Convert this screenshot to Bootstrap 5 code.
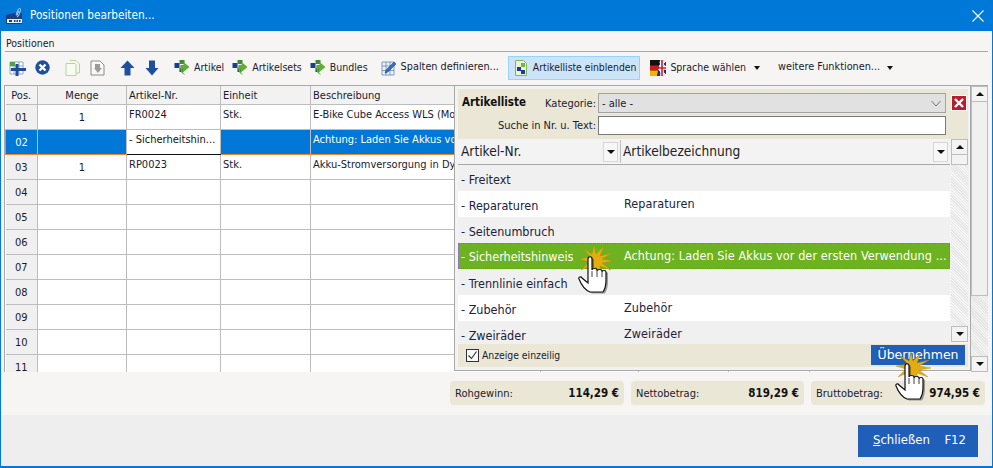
<!DOCTYPE html>
<html lang="de">
<head>
<meta charset="utf-8">
<title>Positionen bearbeiten</title>
<link rel="stylesheet" href="https://cdn.jsdelivr.net/npm/bootstrap@5.3.0/dist/css/bootstrap.min.css">
<style>
html,body{height:468px;overflow:hidden;background:#f6f5f3}
body{font-family:"DejaVu Sans",sans-serif;font-stretch:condensed;font-size:11px;line-height:1;color:#1a1a2e}
.win{width:993px;height:468px;border:1px solid #0078d7;border-top:0;border-bottom-width:2px}
.ttl{height:31px;background:#0078d7;color:#fff;font-size:11.700px;padding-left:5px;flex:none}
.ttl .cls{margin-left:auto;margin-right:8px}
.menu-lbl{height:21px;margin:0 4px;padding:7px 1px 0;border-bottom:1.500px solid #a8a8a8;flex:none;font-size:10.500px}
.tools{height:33px;padding:0 0 2px 8px;flex:none;font-size:10.500px}
.tool{white-space:nowrap;color:#1a1a2e;flex:none}
.fs-s{font-size:10.300px}
.fs-m{font-size:10.800px}
.act{height:24px;padding:0 3px 0 6px;margin:0 10px 0 9px;background:#cce4f7;border:1px solid #99d1ff}
.caret{display:inline-block;border:3.500px solid transparent;border-top:4px solid #111;border-bottom:0}
.gridwrap{height:287px;margin:0 4px 0 3px;border-top:1.500px solid #a8a8a8;flex:none;overflow:hidden}
.gridbox{width:968px;height:286px;overflow:hidden;background:#fff;border-left:1px solid #a8a8a8}
.gtab{table-layout:fixed;width:968px;margin:0;border-collapse:collapse;--bs-table-bg:transparent;font-size:11px}
.gtab th,.gtab td{border:0;border-right:1px solid #bdbdbd;border-bottom:1px solid #bdbdbd;padding:0 2px;overflow:hidden;white-space:nowrap;color:#1a1a2e;font-weight:400;box-shadow:none}
.gtab th{height:18px;background:#f2f2f2;vertical-align:middle;padding-left:2px;padding-top:1px;border-bottom:1px solid #bdbdbd}
.gtab td{height:25px;vertical-align:top;padding-top:4px}
.gtab td.pos{background:#f0f0f0;text-align:center;vertical-align:middle;padding:1px 0 0}
.gtab td.qty{text-align:center;vertical-align:middle;padding:1px 0 0}
.gtab tr.sel td{background:#0078d7;color:#fff;border-right-color:#bdbdbd;border-top:1.500px solid #f08a24;border-bottom:1.500px solid #f08a24}
.gtab tr.sel td.edit{background:#fff;color:#111;border-top:1.500px solid #111;border-bottom:1.500px solid #111}
.gtab tr.sel td.pos{border-left:1.500px solid #f08a24}
.vbar{width:17px;flex:none;background-image:repeating-linear-gradient(45deg,#f4f4f4 0 1px,#e4e4e4 1px 2px)}
.sb{height:16px;background:#f3f3f3;border:1px solid #bdbdbd;flex:none}
.up{display:block;border:4px solid transparent;border-bottom:4px solid #111;border-top:0;width:0}
.dn{display:block;border:4px solid transparent;border-top:4px solid #111;border-bottom:0;width:0}
.thumb{height:194px;background:#f0f0f0;border:1px solid #bdbdbd;border-top:0;flex:none}
.panel{left:450px;top:0;width:517px;height:284.500px;background:#f3f3f3;border:1.500px solid #a8a8a8;border-top:0;padding:3px 2px 3px 3px}
.phead{background:#ebe7d6;height:50px;flex:none;padding:4px 0 0 4px}
.ptitle{font-weight:700;width:78px;font-size:11.500px;color:#111}
.plab{text-align:right;white-space:nowrap}
.psel{width:348px;height:20px;background:#e1e1e1;border:1px solid #a3a3a3;padding:4px 4px 0 3px;margin-left:2px;flex:none}
.pinp{width:348px;height:19px;background:#fff;border:1px solid #7a7a7a;margin-left:2px;flex:none}
.pclose{width:16px;height:16px;background:#b81c2e;border:1px solid #fff;margin-left:5px;flex:none}
.lhead{height:26px;background:#f3f3f3;border-bottom:1.500px solid #a8a8a8;font-size:13.600px;color:#222;flex:none}
.lhead .hc1{width:163px;padding-left:3px;flex:none;border-right:1px solid #bdbdbd;height:23px}
.lhead .hc2{flex:1;padding-left:2px;height:23px}
.hbtn{width:15px;height:20px;background:#f7f7f7;border:1px solid #d6d6d6;flex:none;margin-left:auto;margin-right:2px}
.lrows{width:492px;overflow:hidden;flex:1;background:#fff}
.lrow{height:26px;padding:0;border:0;border-radius:0;font-size:12.500px;color:#22223a;background:#fff;flex:none;white-space:nowrap}
.lrow.alt{background:#f0f0f0}
.lrow .c1{width:165px;padding:4px 0 0 3px;flex:none}
.lrow .c2{flex:1;padding:0 0 1px 1px;letter-spacing:.1px;line-height:1.200}
.lrow.hit{background:#6db321;color:#fff;outline:1px dotted #8a6fb0;outline-offset:-1px}
.lrow.hit .c1{padding-top:2px}
.lscroll{width:17px;flex:none;background-image:repeating-linear-gradient(45deg,#f6f6f6 0 1px,#e6e6e6 1px 2px);height:203px}
.pfoot{height:23px;background:#ebe7d6;flex:none;padding:0 3px 0 8px;font-size:10.300px}
.chk{width:13px;height:13px;border:1px solid #333;background:#f8f8f8;flex:none;margin-right:3px}
.okbtn{width:94px;height:20px;background:#1f5fb9;color:#fff;border:0;border-radius:0;padding:0;font-size:12.500px}
.sumrow{height:43px;padding:9px 3px 0 449px;flex:none}
.sumbox{height:24px;background:#ebe7d6;border-radius:4px;padding:1px 5px 0;margin-right:7px;font-size:11px}
.sumbox b{margin-left:auto;color:#111;font-size:11.500px;font-weight:700}
.w174{width:174px}.w173{width:173px}
.ftr{background:#eeeeee;flex:1;padding:10px 14px 0 0}
.closebtn{width:120px;height:32px;background:#1f5fb9;color:#fff;border:0;border-radius:0;padding:0 12px 0 15px;font-size:11.700px}
.hand{width:40px;height:50px;z-index:5}
.ha{left:570px;top:158px}
.hb{left:891px;top:351px}
</style>
</head>
<body>
<svg width="0" height="0" class="position-absolute">
<defs>
<symbol id="art" viewBox="0 0 16 16"><rect x="0" y="3" width="5" height="5" fill="#1b3f8f"/><rect x="5" y="0" width="5" height="4" fill="#3c8a3a"/><rect x="5" y="8" width="4" height="4" fill="#1b3f8f"/><path d="M6 5h3V2l6 5-6 5V9H8c0 3 1 5 3 6-4-1-6-4-5-10z" fill="#5fae35"/></symbol>
<symbol id="star" viewBox="0 0 40 50"><path d="M20 1l2 9 8-8-4 10 12-3-10 6 12 2-12 2 9 7-11-4 1 9-5-8-5 8 1-10-11 5 8-8-10-3 12-2-9-9 10 6z" fill="#e3ac11" stroke="#a98a10" stroke-width=".4"/><path d="M16 48c-5-2-9-8-11-13-1-2 2-3 3-1l6 5V15c0-3 4-3 4 0v11c0-2 5-2 5 0v1c0-2 5-2 5 0v1c0-2 4-2 4 0v8c0 5-1 9-3 12z" fill="#000" opacity=".35" transform="translate(2 1.500)"/><path d="M16 48c-5-2-9-8-11-13-1-2 2-3 3-1l6 5V15c0-3 4-3 4 0v11c0-2 5-2 5 0v1c0-2 5-2 5 0v1c0-2 4-2 4 0v8c0 5-1 9-3 12z" fill="#fff" stroke="#111" stroke-width="1.200"/><path d="M18 27v6M23 27v6M28 28v5" stroke="#111" stroke-width=".8"/></symbol>
</defs>
</svg>
<div class="win d-flex flex-column">
  <div class="ttl d-flex align-items-center">
    <svg width="18" height="18" viewBox="0 0 18 18" style="margin-right:6px"><path d="M0 8l9-2h7v11H0z" fill="#1d3f7f"/><path d="M10 8l2-5c.5-2 3-2 2.500 0l-2 6c-.5 1-2 .5-1.500-.5l1.500-4.500" stroke="#dfe8f3" stroke-width=".8" fill="none"/><rect x="1" y="12" width="15" height="4" fill="#e8edf5"/><path d="M3 13h3v2H3zM8 13h1.500v2H8zM10.500 13H12v2h-1.500zM13 13h1.500v2H13z" fill="#1d3f7f"/></svg>
    <span>Positionen bearbeiten...</span>
    <svg class="cls" width="12" height="12" viewBox="0 0 12 12"><path d="M.5.5l11 11M11.500.5l-11 11" stroke="#fff" stroke-width="1.100"/></svg>
  </div>
  <div class="menu-lbl">Positionen</div>
  <div class="tools d-flex align-items-center">
    <svg class="tool" width="17" height="16" viewBox="0 0 17 16" style="margin-right:9px"><path d="M1 2h13v12H1zM1 6h13M1 10h13M5 2v12M10 2v12" fill="#fff" stroke="#6f97c6" stroke-width=".8"/><rect x="1" y="2" width="5" height="4" fill="#4fa33a"/><path d="M8 4v12M2 9.500h15" stroke="#1d4d9c" stroke-width="3"/></svg>
    <svg class="tool" width="15" height="15" viewBox="0 0 15 15" style="margin-right:15px"><circle cx="7.500" cy="7.500" r="7.200" fill="#1f4f9f"/><path d="M4.500 4.500l6 6M10.500 4.500l-6 6" stroke="#fff" stroke-width="2.400"/></svg>
    <svg class="tool" width="15" height="16" viewBox="0 0 15 16" style="margin-right:10px"><path d="M1 3.500h9l1 1v11H1z" fill="#f8fbf2" stroke="#b7d59a"/><path d="M5 .5h6l3.500 3.500v9H11" fill="none" stroke="#b7d59a"/></svg>
    <svg class="tool" width="15" height="16" viewBox="0 0 15 16" style="margin-right:15px"><path d="M1 1h9l4 4v10H1z" fill="#f8f8f8" stroke="#8a8a8a"/><path d="M5 4h5v4h2l-4 5-4-5h1z" fill="#9a9a9a"/></svg>
    <svg class="tool" width="15" height="16" viewBox="0 0 15 16" style="margin-right:10px"><path d="M7.500 .5L14.500 8H10.500V15.500H4.500V8H.5z" fill="#1f4f9f"/></svg>
    <svg class="tool" width="14" height="16" viewBox="0 0 14 16" style="margin-right:15px"><path d="M7 15.500L.5 8H4V.5h6V8h3.500z" fill="#1f4f9f"/></svg>
    <svg class="tool" width="17" height="16" style="margin-right:3px"><use href="#art"/></svg>
    <span class="tool" style="margin-right:8px">Artikel</span>
    <svg class="tool" width="17" height="16" style="margin-right:3px"><use href="#art"/></svg>
    <span class="tool" style="margin-right:8px">Artikelsets</span>
    <svg class="tool" width="17" height="16" style="margin-right:3px"><use href="#art"/></svg>
    <span class="tool" style="margin-right:13px">Bundles</span>
    <svg class="tool" width="16" height="16" viewBox="0 0 16 16" style="margin-right:4px"><path d="M1 2h12v13H1zM1 6h12M1 10.500h12M5 2v13M9 2v13" fill="#eef3fa" stroke="#5e86b8" stroke-width=".8"/><path d="M4 13l1-3 8-8 2 2-8 8z" fill="#3c6cb4" stroke="#1d3f7f" stroke-width=".5"/></svg>
    <span class="tool fs-m">Spalten definieren...</span>
    <div class="act tool d-flex align-items-center fs-s">
      <svg width="12" height="16" viewBox="0 0 12 16" style="margin-right:6px"><path d="M.5.5h8l3 3v12H.5z" fill="#eaf3dc" stroke="#82b55a"/><rect x="2" y="7" width="4" height="4" fill="#1b3f8f"/><rect x="6" y="3" width="4" height="4" fill="#79b547"/><rect x="6" y="10" width="4" height="4" fill="#1b3f8f"/></svg>
      <span>Artikelliste einblenden</span>
    </div>
    <svg class="tool" width="16" height="16" viewBox="0 0 16 16" style="margin-right:4px"><rect width="16" height="16" fill="#22306f"/><path d="M0 16L16 0M16 16L8 8M8 0l8 8" stroke="#fff" stroke-width="2"/><path d="M12 0v16M7 8h9" stroke="#fff" stroke-width="3.500"/><path d="M12 0v16M7 8h9" stroke="#c8202f" stroke-width="1.600"/><path d="M0 0h10L7 16H0z" fill="#111"/><path d="M0 5.500h9L8 10.500H0z" fill="#d8141f"/><path d="M0 10.500h8L7 16H0z" fill="#f5b400"/></svg>
    <span class="tool" style="margin-right:8px">Sprache wählen</span>
    <span class="caret tool" style="margin-right:18px"></span>
    <span class="tool fs-m" style="margin-right:7px">weitere Funktionen...</span>
    <span class="caret tool"></span>
  </div>
  <div class="gridwrap d-flex position-relative">
    <div class="gridbox">
      <table class="table gtab">
        <colgroup><col style="width:32px"><col style="width:89px"><col style="width:94px"><col style="width:90px"><col style="width:230px"><col style="width:98px"><col style="width:90px"><col style="width:81px"><col></colgroup>
        <thead><tr><th class="text-center">Pos.</th><th class="text-center">Menge</th><th>Artikel-Nr.</th><th>Einheit</th><th>Beschreibung</th><th></th><th></th><th></th><th></th></tr></thead>
        <tbody>
          <tr><td class="pos">01</td><td class="qty">1</td><td>FR0024</td><td>Stk.</td><td>E-Bike Cube Access WLS  (Mou</td><td></td><td></td><td></td><td></td></tr>
          <tr class="sel"><td class="pos">02</td><td class="qty"></td><td class="edit">- Sicherheitshin...</td><td></td><td>Achtung: Laden Sie Akkus vor</td><td></td><td></td><td></td><td></td></tr>
          <tr><td class="pos">03</td><td class="qty">1</td><td>RP0023</td><td>Stk.</td><td>Akku-Stromversorgung in Dyn</td><td></td><td></td><td></td><td></td></tr>
          <tr><td class="pos">04</td><td></td><td></td><td></td><td></td><td></td><td></td><td></td><td></td></tr>
          <tr><td class="pos">05</td><td></td><td></td><td></td><td></td><td></td><td></td><td></td><td></td></tr>
          <tr><td class="pos">06</td><td></td><td></td><td></td><td></td><td></td><td></td><td></td><td></td></tr>
          <tr><td class="pos">07</td><td></td><td></td><td></td><td></td><td></td><td></td><td></td><td></td></tr>
          <tr><td class="pos">08</td><td></td><td></td><td></td><td></td><td></td><td></td><td></td><td></td></tr>
          <tr><td class="pos">09</td><td></td><td></td><td></td><td></td><td></td><td></td><td></td><td></td></tr>
          <tr><td class="pos">10</td><td></td><td></td><td></td><td></td><td></td><td></td><td></td><td></td></tr>
          <tr><td class="pos">11</td><td></td><td></td><td></td><td></td><td></td><td></td><td></td><td></td></tr>
        </tbody>
      </table>
    </div>
    <div class="vbar d-flex flex-column">
      <div class="sb d-flex align-items-center justify-content-center"><span class="up"></span></div>
      <div class="thumb"></div>
      <div class="flex-grow-1"></div>
      <div class="sb d-flex align-items-center justify-content-center"><span class="dn"></span></div>
    </div>
    <div class="panel position-absolute d-flex flex-column">
      <div class="phead d-flex flex-column">
        <div class="d-flex align-items-center">
          <div class="ptitle">Artikelliste</div>
          <div class="plab" style="width:56px">Kategorie:</div>
          <div class="psel d-flex"><span>- alle -</span><svg class="ms-auto" width="10" height="12" viewBox="0 0 10 12"><path d="M.5 3L5 8 9.500 3" fill="none" stroke="#777"/></svg></div>
          <div class="pclose d-flex align-items-center justify-content-center"><svg width="10" height="10" viewBox="0 0 10 10"><path d="M1 1l8 8M9 1l-8 8" stroke="#fff" stroke-width="2.400"/></svg></div>
        </div>
        <div class="d-flex align-items-center" style="margin-top:3px">
          <div class="plab" style="width:134px">Suche in Nr. u. Text:</div>
          <div class="pinp"></div>
        </div>
      </div>
      <div class="d-flex flex-grow-1" style="min-height:0">
        <div class="d-flex flex-column" style="width:492px">
          <div class="lhead d-flex align-items-center">
            <div class="hc1 d-flex align-items-center"><span>Artikel-Nr.</span><span class="hbtn d-flex align-items-center justify-content-center"><span class="dn"></span></span></div>
            <div class="hc2 d-flex align-items-center"><span>Artikelbezeichnung</span><span class="hbtn d-flex align-items-center justify-content-center"><span class="dn"></span></span></div>
          </div>
          <div class="lrows list-group list-group-flush">
            <div class="list-group-item lrow alt d-flex align-items-center"><span class="c1">- Freitext</span><span class="c2"></span></div>
            <div class="list-group-item lrow d-flex align-items-center"><span class="c1">- Reparaturen</span><span class="c2">Reparaturen</span></div>
            <div class="list-group-item lrow alt d-flex align-items-center"><span class="c1">- Seitenumbruch</span><span class="c2"></span></div>
            <div class="list-group-item lrow hit d-flex align-items-center"><span class="c1">- Sicherheitshinweis</span><span class="c2">Achtung: Laden Sie Akkus vor der ersten Verwendung ...</span></div>
            <div class="list-group-item lrow alt d-flex align-items-center"><span class="c1">- Trennlinie einfach</span><span class="c2"></span></div>
            <div class="list-group-item lrow d-flex align-items-center"><span class="c1">- Zubehör</span><span class="c2">Zubehör</span></div>
            <div class="list-group-item lrow alt d-flex align-items-center"><span class="c1">- Zweiräder</span><span class="c2">Zweiräder</span></div>
          </div>
        </div>
        <div class="lscroll d-flex flex-column ms-auto">
          <div class="sb d-flex align-items-center justify-content-center"><span class="up"></span></div>
          <div class="sb" style="height:10px;border-top:0"></div>
          <div class="flex-grow-1"></div>
          <div class="sb d-flex align-items-center justify-content-center"><span class="dn"></span></div>
        </div>
      </div>
      <div class="pfoot d-flex align-items-center">
        <span class="chk d-flex align-items-center justify-content-center"><svg width="11" height="11" viewBox="0 0 11 11"><path d="M1.500 5.500l3 3 5-7" fill="none" stroke="#333" stroke-width="1.100"/></svg></span>
        <span>Anzeige einzeilig</span>
        <button class="btn okbtn ms-auto" type="button">Übernehmen</button>
      </div>
    </div>
    <svg class="hand position-absolute ha"><use href="#star"/></svg>
  </div>
  <div class="sumrow d-flex">
    <div class="sumbox w174 d-flex align-items-center"><span>Rohgewinn:</span><b>114,29 €</b></div>
    <div class="sumbox w173 d-flex align-items-center"><span>Nettobetrag:</span><b>819,29 €</b></div>
    <div class="sumbox w174 d-flex align-items-center" style="margin-right:0"><span>Bruttobetrag:</span><b>974,95 €</b></div>
  </div>
  <div class="ftr d-flex justify-content-end align-items-start">
    <button class="btn closebtn d-flex align-items-center justify-content-between" type="button"><span><u>S</u>chließen</span><span>F12</span></button>
  </div>
  <svg class="hand position-absolute hb"><use href="#star"/></svg>
</div>
</body>
</html>
